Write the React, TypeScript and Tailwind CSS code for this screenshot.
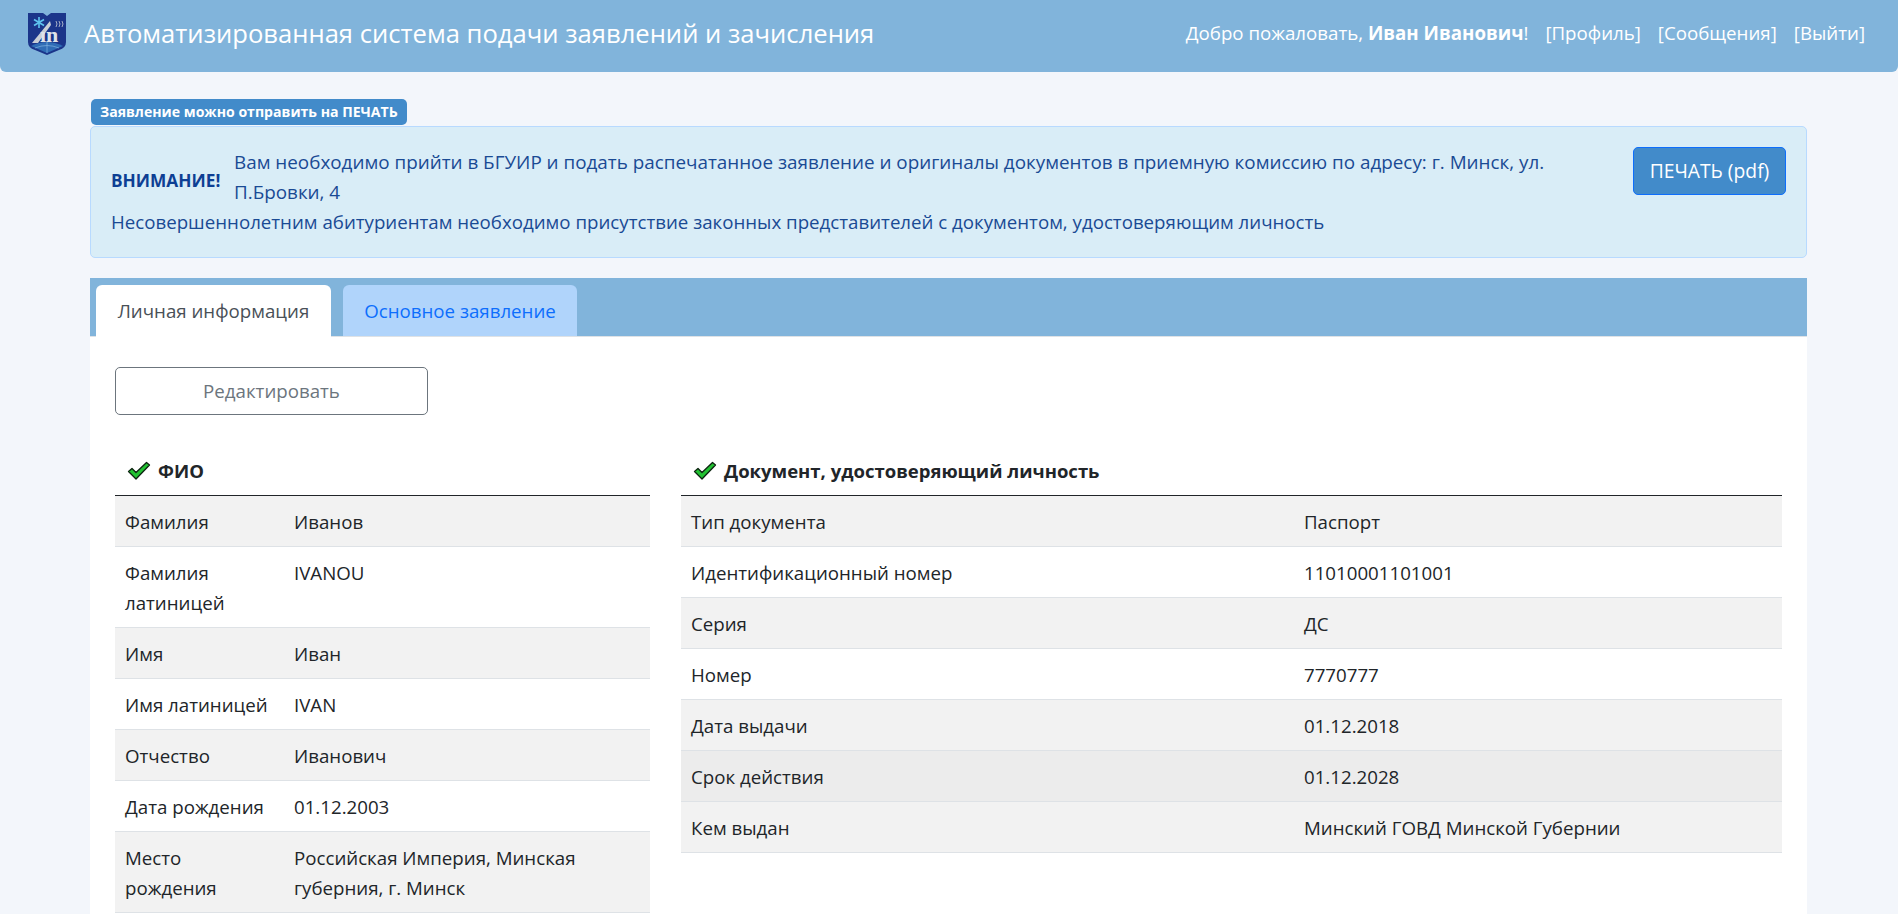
const fio = [
  { label: "Фамилия", value: "Иванов" },
  { label: "Фамилия латиницей", value: "IVANOU" },
  { label: "Имя", value: "Иван" },
  { label: "Имя латиницей", value: "IVAN" },
  { label: "Отчество", value: "Иванович" },
  { label: "Дата рождения", value: "01.12.2003" },
  { label: "Место рождения", value: "Российская Империя, Минская губерния, г. Минск" },
];

const passport = [
  { label: "Тип документа", value: "Паспорт" },
  { label: "Идентификационный номер", value: "11010001101001" },
  { label: "Серия", value: "ДС" },
  { label: "Номер", value: "7770777" },
  { label: "Дата выдачи", value: "01.12.2018" },
  { label: "Срок действия", value: "01.12.2028", hover: true },
  { label: "Кем выдан", value: "Минский ГОВД Минской Губернии" },
];

function Logo() {
  return (
    <svg width="38" height="44" viewBox="0 0 38 44" className="shrink-0">
      <path d="M0 1 H15 L19 4 L23 1 H38 V30 Q38 36 31 38 L19 43 L7 38 Q0 36 0 30 Z" fill="#1b358a" />
      <path d="M3 34 Q19 26 35 34 L19 41 Z" fill="#2f6cb5" />
      <path d="M7 36 Q19 31 31 36 M19 29 V41" stroke="#7fb2e0" strokeWidth="0.7" fill="none" />
      <path d="M4 31 L22 9 L23 13 L10 31 Z" fill="#c9ced6" />
      <g stroke="#5fc4ef" strokeWidth="1.6">
        <path d="M11 5 V16" />
        <path d="M6 7.5 L16 13.5" />
        <path d="M16 7.5 L6 13.5" />
      </g>
      <path d="M28 9 Q30 12 28 15 M31 9 Q33 12 31 15 M34 9 Q36 12 34 15" stroke="#c9ced6" strokeWidth="0.8" fill="none" />
      <text x="12" y="30" fontSize="22" fontWeight="700" fontFamily="'Liberation Serif', serif" fill="#dfe3ea">
        ın
      </text>
    </svg>
  );
}

function Check() {
  return (
    <svg width="24" height="20" viewBox="0 0 24 20" className="shrink-0">
      <path
        d="M1.5 10.5 L5 7.5 L9 11.5 L19.5 1.5 L22.5 4 L9 18 Z"
        fill="#22c232"
        stroke="#0c2410"
        strokeWidth="1.3"
        strokeLinejoin="round"
      />
    </svg>
  );
}

function DataTable({
  title,
  rows,
  labelWidth,
}: {
  title: string;
  rows: { label: string; value: string; hover?: boolean }[];
  labelWidth: string;
}) {
  return (
    <div>
      <div className="flex items-center gap-[7px] h-[48px] pl-[12px] pb-[2px] border-b border-[#212529] font-bold text-[18.5px] text-[#212529]">
        <Check />
        <span>{title}</span>
      </div>
      {rows.map((r, i) => (
        <div
          key={r.label}
          className={`flex border-b border-[#dee2e6] pt-[11px] pb-[9px] px-[10px] text-[#212529] ${
            r.hover ? "bg-[#ececec]" : i % 2 === 0 ? "bg-[#f2f2f2]" : "bg-white"
          }`}
        >
          <div className={`${labelWidth} shrink-0 pr-[19px]`}>{r.label}</div>
          <div className="flex-1">{r.value}</div>
        </div>
      ))}
    </div>
  );
}

export default function App() {
  return (
    <div className="h-[914px] overflow-hidden bg-[#f3f6fb] text-[18.7px] leading-[30px] font-['Open_Sans','Noto_Sans',sans-serif]">
      <header className="h-[72px] bg-[#81b4db] rounded-b-[6px] flex items-center justify-between pl-[28px] pr-[33px] text-white">
        <div className="flex items-center gap-[18px] -mt-[4px]">
          <Logo />
          <span className="text-[25.6px]">Автоматизированная система подачи заявлений и зачисления</span>
        </div>
        <div className="flex gap-[17px] -mt-[6px]">
          <span>
            Добро пожаловать, <b>Иван Иванович</b>!
          </span>
          <a>[Профиль]</a>
          <a>[Сообщения]</a>
          <a>[Выйти]</a>
        </div>
      </header>

      <main className="ml-[90px] mr-[91px] mt-[27px]">
        <span className="block w-fit ml-px h-[26px] leading-[26px] px-[9px] rounded-[5px] bg-[#428bca] text-white text-[14.1px] font-bold">
          Заявление можно отправить на ПЕЧАТЬ
        </span>

        <div className="h-[132px] flex items-center justify-between mt-px border border-[#b8daff] rounded-[5px] bg-[#d9edf7] pl-[20px] pr-[20px] text-[#1a4a94]">
          <div className="w-[1440px]">
            <div className="flex">
              <b className="text-[#0e3f94] w-[123px] shrink-0 text-[17.3px] leading-[68px] h-[60px]">ВНИМАНИЕ!</b>
              <span className="text-[18.85px]">
                Вам необходимо прийти в БГУИР и подать распечатанное заявление и оригиналы документов в приемную комиссию
                по адресу: г. Минск, ул. П.Бровки, 4
              </span>
            </div>
            <div>Несовершеннолетним абитуриентам необходимо присутствие законных представителей с документом, удостоверяющим личность</div>
          </div>
          <button className="w-[153px] h-[48px] bg-[#428bca] border border-[#0d6efd] rounded-[5px] text-white text-[19.3px] -mt-[42px]">
            ПЕЧАТЬ (pdf)
          </button>
        </div>

        <div className="mt-[20px] h-[59px] bg-[#81b4db] flex items-end pl-[6px] gap-[12px] border-b border-[#dee2e6]">
          <div className="w-[235px] h-[52px] -mb-px bg-white rounded-t-[6px] flex items-center justify-center text-[#495057]">
            Личная информация
          </div>
          <div className="w-[234px] h-[51px] bg-[#b0d4fb] rounded-t-[6px] flex items-center justify-center text-[#0d6efd]">
            Основное заявление
          </div>
        </div>

        <div className="bg-white px-[25px] pt-[30px] pb-[40px]">
          <button className="w-[313px] h-[48px] border border-[#6c757d] rounded-[5px] text-[#6c757d]">Редактировать</button>
          <div className="flex gap-[31px] mt-[33px]">
            <div className="w-[535px] shrink-0">
              <DataTable title="ФИО" rows={fio} labelWidth="w-[169px]" />
            </div>
            <div className="flex-1">
              <DataTable title="Документ, удостоверяющий личность" rows={passport} labelWidth="w-[613px]" />
            </div>
          </div>
        </div>
      </main>
    </div>
  );
}
